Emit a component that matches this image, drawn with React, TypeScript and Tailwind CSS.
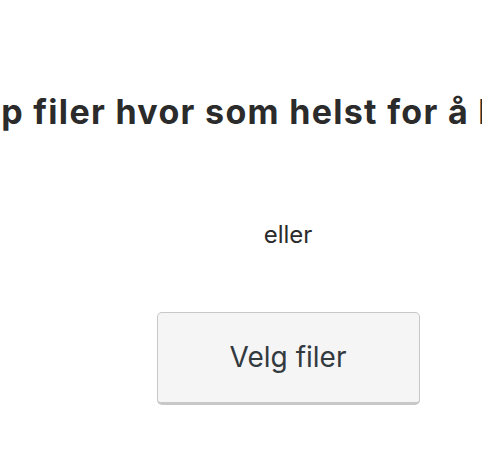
export default function App() {
  return (
    <div className="h-[458px] w-[482px] overflow-hidden bg-white">
      <div className="flex w-[576px] flex-col items-center pt-[88px]">
        <h1 className="whitespace-nowrap font-[Inter,sans-serif] text-[34px] font-bold leading-[48px] tracking-[1.3px] text-[#2b2b2b]">
          Slipp filer hvor som helst for å laste opp
        </h1>
        <p className="mt-[84px] font-[Inter,sans-serif] text-[24px] leading-[30px] text-[#2b2b2b]">
          eller
        </p>
        <button className="mt-[62px] h-[93px] w-[263px] rounded-[5px] border border-b-[3px] border-[#c8c8c8] bg-[#f5f5f5] pb-[2px] font-[Inter,sans-serif] text-[28px] text-[#333a3f]">
          Velg filer
        </button>
      </div>
    </div>
  );
}
